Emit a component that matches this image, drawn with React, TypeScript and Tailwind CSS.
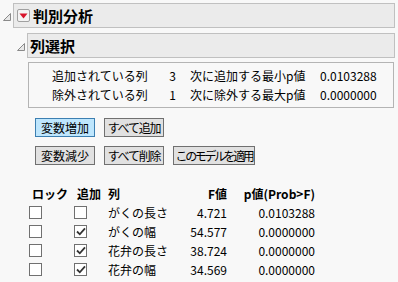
import React from 'react';

const font = { fontFamily: '"Noto Sans CJK JP", "Noto Sans", sans-serif' };

function Disclosure() {
  return (
    <svg width="8" height="8" viewBox="0 0 8 8" className="shrink-0">
      <polygon points="7.5,0.5 7.5,7.5 0.5,7.5" fill="#e8e8e8" stroke="#8a8a8a" strokeWidth="1" />
    </svg>
  );
}

function RedMenu() {
  return (
    <div className="flex h-[13px] w-[13px] items-center justify-center rounded-[2px] border border-[#a0a0a0] bg-[#f4f4f4]">
      <svg width="9" height="6" viewBox="0 0 9 6">
        <polygon points="0.5,0.5 8.5,0.5 4.5,5.5" fill="#d8142b" />
      </svg>
    </div>
  );
}

function Check({ on }: { on: boolean }) {
  return (
    <div className="flex h-[13px] w-[13px] items-center justify-center border border-[#707070] bg-white">
      {on && (
        <svg width="10" height="9" viewBox="0 0 10 9">
          <path d="M1 4.5 L3.8 7.3 L9 1.3" fill="none" stroke="#333" strokeWidth="1.8" />
        </svg>
      )}
    </div>
  );
}

function Btn({ label, w, track, active }: { label: string; w: string; track: string; active?: boolean }) {
  return (
    <div
      className={`flex h-[19px] items-center justify-center whitespace-nowrap text-[12px] leading-none text-black ${w} ${track} ${
        active ? 'border border-[#3c7fb1] bg-[#bee6fd]' : 'border border-[#707070] bg-[#e1e1e1]'
      }`}
    >
      {label}
    </div>
  );
}

const rows = [
  { name: 'がくの長さ', add: false, f: '4.721', p: '0.0103288' },
  { name: 'がくの幅', add: true, f: '54.577', p: '0.0000000' },
  { name: '花弁の長さ', add: true, f: '38.724', p: '0.0000000' },
  { name: '花弁の幅', add: true, f: '34.569', p: '0.0000000' },
];

export default function App() {
  return (
    <div className="h-[282px] w-[398px] overflow-hidden bg-[#f8f8f8] text-black" style={font}>
      <div className="flex items-center pt-[3px] pr-[3px]">
        <div className="flex w-[13px] justify-center pt-[2px]">
          <Disclosure />
        </div>
        <div className="flex h-[25px] flex-1 items-center gap-[3px] border border-[#c0c0c0] bg-[#ebebeb] pl-[3px]">
          <RedMenu />
          <span className="text-[15px] font-bold leading-none">判別分析</span>
        </div>
      </div>
      <div className="flex items-center pt-[5px] pr-[3px] pl-[14px]">
        <div className="flex w-[13px] justify-center pt-[2px]">
          <Disclosure />
        </div>
        <div className="flex h-[25px] flex-1 items-center border border-[#c0c0c0] bg-[#ebebeb] pl-[2px]">
          <span className="text-[15px] font-bold leading-none">列選択</span>
        </div>
      </div>
      <div className="ml-[28px] mr-[4px] mt-[4px] border border-[#b4b4b4] bg-[#f8f8f8] pt-[3px] pb-[3px] pl-[23px] text-[12px]">
        <div className="flex h-[19px] items-center">
          <span className="w-[114px]">追加されている列</span>
          <span className="w-[10px] text-right">3</span>
          <span className="ml-[14px] w-[130px]">次に追加する最小p値</span>
          <span>0.0103288</span>
        </div>
        <div className="flex h-[19px] items-center">
          <span className="w-[114px]">除外されている列</span>
          <span className="w-[10px] text-right">1</span>
          <span className="ml-[14px] w-[130px]">次に除外する最大p値</span>
          <span>0.0000000</span>
        </div>
      </div>
      <div className="ml-[35px] mt-[10px] flex flex-col gap-[9px]">
        <div className="flex gap-[9px]">
          <Btn label="変数増加" w="w-[60px]" track="tracking-[0px]" active />
          <Btn label="すべて追加" w="w-[60px]" track="tracking-[-1.2px]" />
        </div>
        <div className="flex gap-[9px]">
          <Btn label="変数減少" w="w-[60px]" track="tracking-[0px]" />
          <Btn label="すべて削除" w="w-[60px]" track="tracking-[-1.2px]" />
          <Btn label="このモデルを適用" w="w-[82px]" track="tracking-[-2.4px]" />
        </div>
      </div>
      <div className="ml-[29px] mt-[19px] text-[12px]">
        <div className="flex h-[19px] items-center font-bold">
          <span className="w-[45px] pl-[3px]">ロック</span>
          <span className="w-[34px] pl-[3px]">追加</span>
          <span className="w-[80px]">列</span>
          <span className="w-[39px] text-right">F値</span>
          <span className="w-[88px] text-right">p値(Prob&gt;F)</span>
        </div>
        {rows.map((r) => (
          <div key={r.name} className="flex h-[19px] items-center">
            <div className="w-[45px]">
              <Check on={false} />
            </div>
            <div className="w-[34px]">
              <Check on={r.add} />
            </div>
            <span className="w-[80px]">{r.name}</span>
            <span className="w-[39px] text-right">{r.f}</span>
            <span className="w-[88px] text-right">{r.p}</span>
          </div>
        ))}
      </div>
    </div>
  );
}
